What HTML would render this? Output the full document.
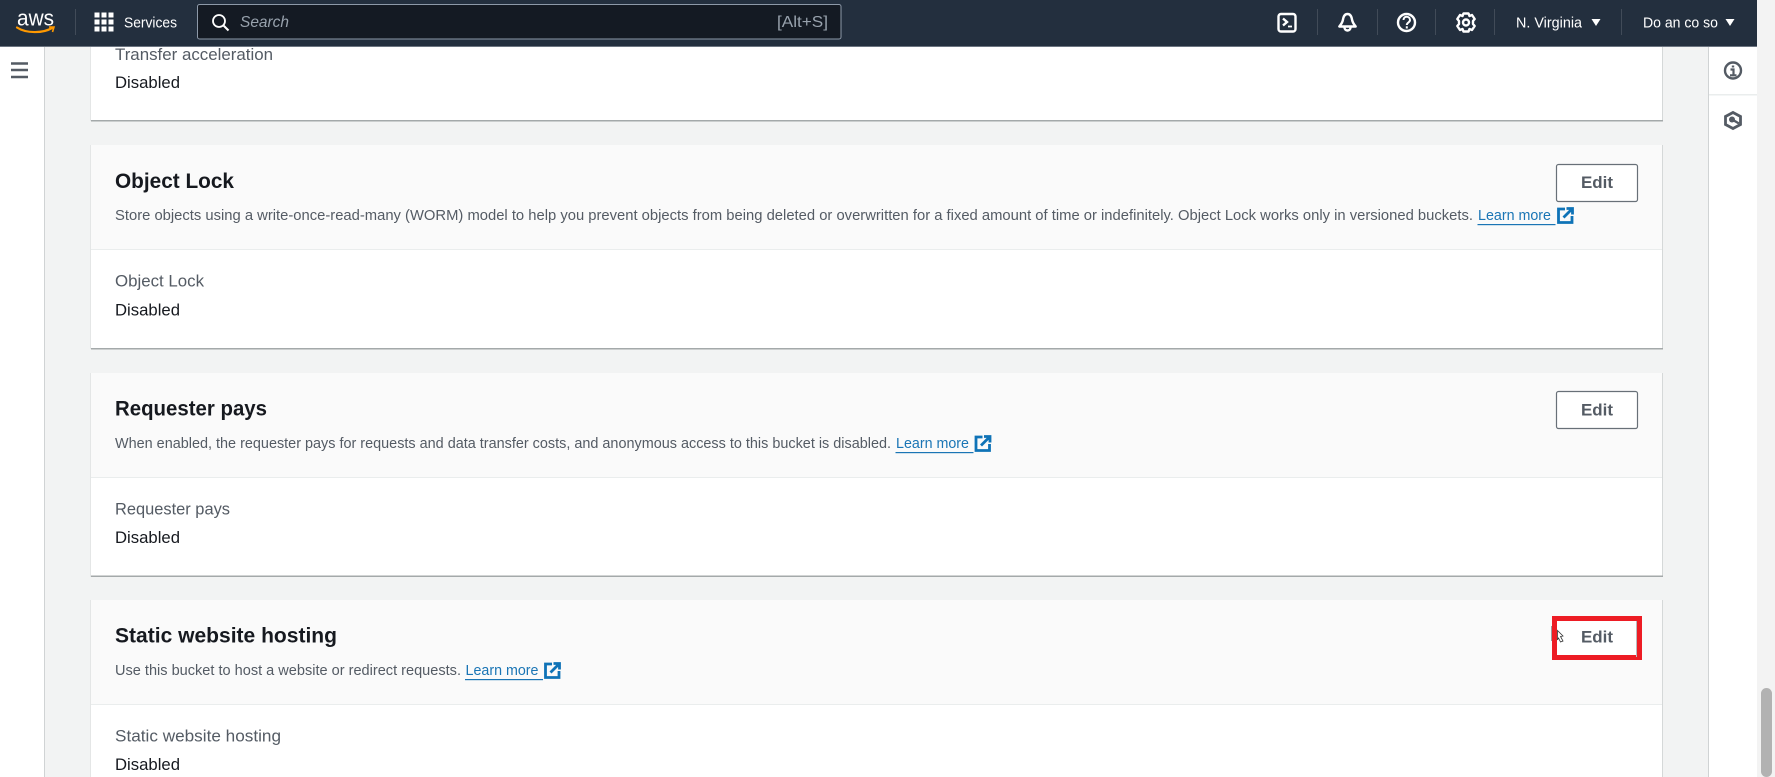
<!DOCTYPE html>
<html><head><meta charset="utf-8"><title>S3 bucket properties</title>
<style>
html,body{margin:0;padding:0;width:1775px;height:777px;overflow:hidden;background:#f2f3f3}
svg{display:block;font-family:"Liberation Sans",sans-serif;filter:blur(.35px)}
.t{font-size:21px;font-weight:700;fill:#16191f}
.d{font-size:14.5px;fill:#545b64}
.l{font-size:16.5px;fill:#545b64}
.v{font-size:16.5px;fill:#16191f}
.a{font-size:14.5px;fill:#1a75b5}
.e{font-size:16.5px;font-weight:700;fill:#545b64}
.n{font-size:15px;fill:#fff}
</style></head><body>
<svg width="1775" height="777" viewBox="0 0 1775 777" xmlns="http://www.w3.org/2000/svg">
<defs>
<g id="ext" fill="none" stroke="#0f73b7" stroke-width="2.8"><path d="M8 2H1.5V15.5H15V9"/><path d="M6.5 10.5L15 2M9.5 1.5H15.5V7.5"/></g>
</defs>
<rect width="1775" height="777" fill="#f2f3f3"/>
<!-- left nav -->
<rect x="0" y="46" width="44" height="731" fill="#fff"/>
<rect x="44" y="46" width="1" height="731" fill="#d0d3d4"/>
<path d="M11 63.5H28M11 70H28M11 77H28" stroke="#545b64" stroke-width="2.4"/>
<!-- right gutter -->
<rect x="1709" y="46" width="48" height="731" fill="#fff"/>
<rect x="1708" y="46" width="1" height="731" fill="#d0d3d4"/>
<rect x="1709" y="94" width="48" height="1.5" fill="#eaeded"/>
<rect x="1757" y="0" width="18" height="777" fill="#f3f3f3"/>
<rect x="1761" y="688" width="11" height="89" rx="5.5" fill="#b2b2b2"/>
<g fill="none" stroke="#545b64" stroke-width="2.4">
<circle cx="1733" cy="70.5" r="8"/>
<path d="M1730.5 69.5H1733.5V75M1730 75.3H1736.5" stroke-width="2.2"/>
<path d="M1733 65.5V67.5" stroke-width="2.4"/>
<path d="M1733 112.5L1740.5 116.5V124.5L1733 128.5L1725.5 124.5V116.5Z" stroke-width="2.8"/>
<circle cx="1732" cy="119.5" r="3" fill="#545b64" stroke="none"/>
<path d="M1733 120L1739 123.5"/>
</g>
<!-- card 1 remainder -->
<rect x="91" y="46" width="1571" height="74" fill="#fff"/>
<rect x="1662" y="46" width="1" height="75" fill="#d5d8d8"/>
<rect x="90" y="46" width="1" height="75" fill="#e4e6e6"/>
<rect x="91" y="120" width="1572" height="1.5" fill="#a4a9aa"/>
<text class="l" x="115" y="60" textLength="158" lengthAdjust="spacingAndGlyphs">Transfer acceleration</text>
<text class="v" x="115" y="88" textLength="65" lengthAdjust="spacingAndGlyphs">Disabled</text>

<!-- Object Lock -->
<g>
<rect x="91" y="145" width="1571" height="203" fill="#fff"/>
<rect x="91" y="145" width="1571" height="104" fill="#fafafa"/>
<rect x="91" y="249" width="1571" height="1" fill="#eaeded"/>
<rect x="90" y="145" width="1" height="204" fill="#e4e6e6"/>
<rect x="1662" y="145" width="1" height="204" fill="#d5d8d8"/>
<rect x="91" y="348" width="1572" height="1.5" fill="#a4a9aa"/>
<text class="t" x="115" y="188" textLength="119" lengthAdjust="spacingAndGlyphs">Object Lock</text>
<text class="d" x="115" y="220" textLength="1358" lengthAdjust="spacingAndGlyphs">Store objects using a write-once-read-many (WORM) model to help you prevent objects from being deleted or overwritten for a fixed amount of time or indefinitely. Object Lock works only in versioned buckets.</text>
<text class="a" x="1478" y="220" textLength="73" lengthAdjust="spacingAndGlyphs">Learn more</text>
<rect x="1477.5" y="224" width="78" height="1.2" fill="#1a75b5"/>
<use href="#ext" x="1557" y="207"/>
<rect x="1556.5" y="164.5" width="81" height="37" rx="2" fill="#fff" stroke="#687078" stroke-width="1.2"/>
<text class="e" x="1581" y="188" textLength="32" lengthAdjust="spacingAndGlyphs">Edit</text>
<text class="l" x="115" y="286.5" textLength="89" lengthAdjust="spacingAndGlyphs">Object Lock</text>
<text class="v" x="115" y="315.5" textLength="65" lengthAdjust="spacingAndGlyphs">Disabled</text>
</g>

<!-- Requester pays -->
<g>
<rect x="91" y="373" width="1571" height="203" fill="#fff"/>
<rect x="91" y="373" width="1571" height="104" fill="#fafafa"/>
<rect x="91" y="477" width="1571" height="1" fill="#eaeded"/>
<rect x="90" y="373" width="1" height="204" fill="#e4e6e6"/>
<rect x="1662" y="373" width="1" height="204" fill="#d5d8d8"/>
<rect x="91" y="575.5" width="1572" height="1.5" fill="#a4a9aa"/>
<text class="t" x="115" y="415.5" textLength="152" lengthAdjust="spacingAndGlyphs">Requester pays</text>
<text class="d" x="115" y="448" textLength="776" lengthAdjust="spacingAndGlyphs">When enabled, the requester pays for requests and data transfer costs, and anonymous access to this bucket is disabled.</text>
<text class="a" x="896" y="448" textLength="73" lengthAdjust="spacingAndGlyphs">Learn more</text>
<rect x="895.5" y="452" width="78" height="1.2" fill="#1a75b5"/>
<use href="#ext" x="974.5" y="435"/>
<rect x="1556.5" y="391.5" width="81" height="37" rx="2" fill="#fff" stroke="#687078" stroke-width="1.2"/>
<text class="e" x="1581" y="415.5" textLength="32" lengthAdjust="spacingAndGlyphs">Edit</text>
<text class="l" x="115" y="514.5" textLength="115" lengthAdjust="spacingAndGlyphs">Requester pays</text>
<text class="v" x="115" y="543" textLength="65" lengthAdjust="spacingAndGlyphs">Disabled</text>
</g>

<!-- Static website hosting -->
<g>
<rect x="91" y="600" width="1571" height="177" fill="#fff"/>
<rect x="91" y="600" width="1571" height="104" fill="#fafafa"/>
<rect x="91" y="704" width="1571" height="1" fill="#eaeded"/>
<rect x="90" y="600" width="1" height="177" fill="#e4e6e6"/>
<rect x="1662" y="600" width="1" height="177" fill="#d5d8d8"/>
<text class="t" x="115" y="642.5" textLength="222" lengthAdjust="spacingAndGlyphs">Static website hosting</text>
<text class="d" x="115" y="675" textLength="346" lengthAdjust="spacingAndGlyphs">Use this bucket to host a website or redirect requests.</text>
<text class="a" x="465.5" y="675" textLength="73" lengthAdjust="spacingAndGlyphs">Learn more</text>
<rect x="465" y="679" width="78" height="1.2" fill="#1a75b5"/>
<use href="#ext" x="544" y="662"/>
<rect x="1551" y="626" width="2" height="15" fill="#9a9fa3"/>
<rect x="1554.5" y="618.5" width="85" height="39" fill="#fff" stroke="#ed1c24" stroke-width="5"/>
<rect x="1636" y="621" width="1" height="36" fill="#b8bcbf"/>
<text class="e" x="1581" y="642.5" textLength="32" lengthAdjust="spacingAndGlyphs">Edit</text>
<path d="M1557.5 630.5L1563 636L1560.5 636.5L1563 641L1560.5 642L1558.5 638L1557.5 640Z" fill="#fff" stroke="#333" stroke-width=".8"/>
<text class="l" x="115" y="741.5" textLength="166" lengthAdjust="spacingAndGlyphs">Static website hosting</text>
<text class="v" x="115" y="770" textLength="65" lengthAdjust="spacingAndGlyphs">Disabled</text>
</g>

<!-- top nav -->
<rect x="0" y="0" width="1757" height="46" fill="#232f3e"/>
<rect x="0" y="46" width="1757" height="1" fill="#6b7480"/>
<text x="17" y="25.5" font-size="22" fill="#fff" textLength="37" lengthAdjust="spacingAndGlyphs">aws</text>
<path d="M17 27.5C26 33.5 43 33.5 52 28" fill="none" stroke="#f90" stroke-width="2.2" stroke-linecap="round"/>
<path d="M49 27H54L52.5 32" fill="none" stroke="#f90" stroke-width="1.6"/>
<rect x="75" y="9" width="1" height="26" fill="#414b58"/>
<g fill="#fff">
<rect x="94.5" y="12.5" width="5" height="5"/><rect x="101.5" y="12.5" width="5" height="5"/><rect x="108.5" y="12.5" width="5" height="5"/>
<rect x="94.5" y="19.5" width="5" height="5"/><rect x="101.5" y="19.5" width="5" height="5"/><rect x="108.5" y="19.5" width="5" height="5"/>
<rect x="94.5" y="26.5" width="5" height="5"/><rect x="101.5" y="26.5" width="5" height="5"/><rect x="108.5" y="26.5" width="5" height="5"/>
</g>
<text class="n" x="124" y="27.5" textLength="53" lengthAdjust="spacingAndGlyphs">Services</text>
<rect x="197.5" y="4.5" width="643.5" height="34.5" rx="2" fill="#141a23" stroke="#8d99a8" stroke-width="1"/>
<circle cx="219" cy="21" r="6" fill="none" stroke="#fff" stroke-width="1.8"/>
<path d="M223.5 25.5L228.5 30.5" stroke="#fff" stroke-width="2"/>
<text x="240" y="27" font-size="16" font-style="italic" fill="#98a2ad" textLength="49" lengthAdjust="spacingAndGlyphs">Search</text>
<text x="777" y="27" font-size="16" fill="#98a2ad" textLength="51" lengthAdjust="spacingAndGlyphs">[Alt+S]</text>

<g fill="none" stroke="#fff" stroke-width="2.4">
<rect x="1278.5" y="14" width="17" height="17.5" rx="2.5"/>
<path d="M1283 18.5L1287 22L1283 25.5"/>
<path d="M1288 26.5H1292" stroke-width="1.8"/>
<path d="M1347.5 14C1344.5 14 1343.5 16.5 1343 19.5C1342.6 22 1341 24.5 1339.3 26.5H1355.7C1354 24.5 1352.4 22 1352 19.5C1351.5 16.5 1350.5 14 1347.5 14Z" stroke-linejoin="round"/>
<path d="M1344.5 27.5A3 3 0 0 0 1350.5 27.5"/>
<circle cx="1406.5" cy="22.5" r="8.5"/>
<path d="M1403.5 20C1403.5 15.5 1410 16 1410 20C1410 22.5 1406.8 22.5 1406.8 25" stroke-width="2"/>
<path d="M1406.8 26.3V28.5" stroke-width="2"/>
<circle cx="1466" cy="22.5" r="3"/>
<path d="M1463.5 13.5H1468.5L1469.5 16L1472 15L1474.7 19L1473 21V24L1474.7 26L1472 30L1469.5 29L1468.5 31.5H1463.5L1462.5 29L1460 30L1457.3 26L1459 24V21L1457.3 19L1460 15L1462.5 16Z" stroke-linejoin="round"/>
</g>
<g fill="#414b58">
<rect x="1317" y="9" width="1" height="26"/><rect x="1377" y="9" width="1" height="26"/><rect x="1435" y="9" width="1" height="26"/><rect x="1494" y="9" width="1" height="26"/><rect x="1621" y="9" width="1" height="26"/>
</g>
<text class="n" x="1516" y="27.5" textLength="66" lengthAdjust="spacingAndGlyphs">N. Virginia</text>
<path d="M1591.5 19H1600.5L1596 26Z" fill="#fff"/>
<text class="n" x="1643" y="27.5" textLength="75" lengthAdjust="spacingAndGlyphs">Do an co so</text>
<path d="M1725.5 19H1734.5L1730 26Z" fill="#fff"/>
</svg>
</body></html>
